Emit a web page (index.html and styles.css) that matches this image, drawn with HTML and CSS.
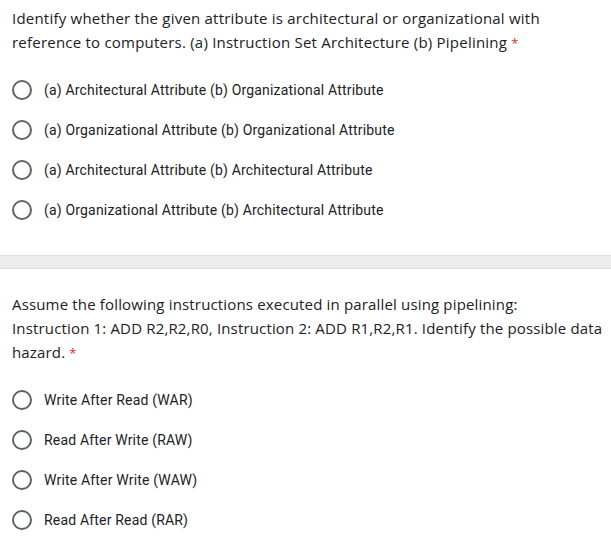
FILE: index.html
```html
<!DOCTYPE html>
<html>
<head>
<meta charset="utf-8">
<link rel="stylesheet" href="styles.css">
</head>
<body>
<div class="form">
  <section class="question first">
    <div class="title">Identify whether the given attribute is architectural or organizational with reference to computers. (a) Instruction Set Architecture (b) Pipelining <span class="req">*</span></div>
    <div class="options">
      <label class="option"><span class="radio"></span><span class="label">(a) Architectural Attribute (b) Organizational Attribute</span></label>
      <label class="option"><span class="radio"></span><span class="label">(a) Organizational Attribute (b) Organizational Attribute</span></label>
      <label class="option"><span class="radio"></span><span class="label">(a) Architectural Attribute (b) Architectural Attribute</span></label>
      <label class="option"><span class="radio"></span><span class="label">(a) Organizational Attribute (b) Architectural Attribute</span></label>
    </div>
  </section>
  <div class="band"></div>
  <section class="question second">
    <div class="title tight">Assume the following instructions executed in parallel using pipelining:<br>Instruction 1: ADD R2,R2,R0, Instruction 2: ADD R1,R2,R1. Identify the possible data hazard. <span class="req">*</span></div>
    <div class="options">
      <label class="option"><span class="radio"></span><span class="label">Write After Read (WAR)</span></label>
      <label class="option"><span class="radio"></span><span class="label">Read After Write (RAW)</span></label>
      <label class="option"><span class="radio"></span><span class="label">Write After Write (WAW)</span></label>
      <label class="option"><span class="radio"></span><span class="label">Read After Read (RAR)</span></label>
    </div>
  </section>
</div>
</body>
</html>
```
FILE: styles.css
```css
html, body {
  margin: 0;
  padding: 0;
  background: #ffffff;
}
.form {
  width: 611px;
}
.question {
  padding: 0 0 0 12px;
}
.question.first {
  padding-top: 6px;
  padding-bottom: 25px;
}
.question.second {
  padding-top: 23px;
}
.title {
  font-family: "Open Sans", "Noto Sans", sans-serif;
  font-size: 15px;
  line-height: 24px;
  color: #202124;
  letter-spacing: 0.22px;
}
.title.tight {
  letter-spacing: 0.16px;
}
.req {
  color: #d93025;
  font-size: 13px;
}
.options {
  margin-top: 15px;
  display: flex;
  flex-direction: column;
}
.option {
  display: flex;
  align-items: center;
  height: 40px;
}
.radio {
  box-sizing: border-box;
  width: 20px;
  height: 20px;
  border: 2px solid #5f6368;
  border-radius: 50%;
  flex: none;
}
.label {
  margin-left: 12px;
  font-family: Roboto, "Liberation Sans", sans-serif;
  font-size: 14px;
  color: #202124;
  letter-spacing: 0.18px;
}
.band {
  height: 12px;
  background: #ececec;
  border-top: 1px solid #dadce0;
  border-bottom: 1px solid #dadce0;
}
```
